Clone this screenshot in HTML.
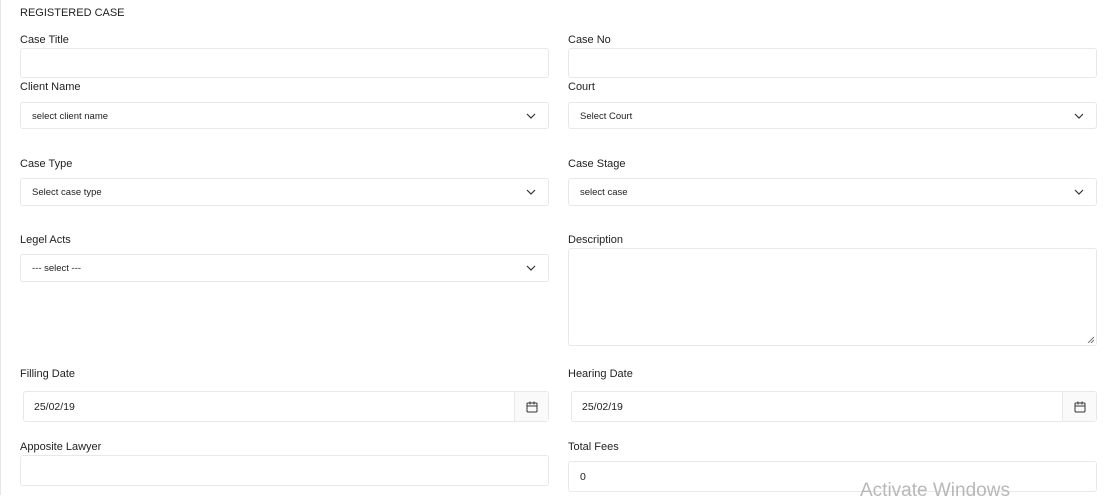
<!DOCTYPE html>
<html><head><style>
body{margin:0;width:1104px;height:495px;background:#fff;font-family:"Liberation Sans",Arial,sans-serif;color:#222;position:relative;overflow:hidden}
.b{position:absolute;border:1px solid #e8e8e8;border-radius:3px;box-sizing:border-box;background:#fff}
.l{position:absolute;font-size:11px;color:#222}
.t{position:absolute;font-size:9.5px;color:#222}
.ch{position:absolute;width:10px;height:6px}
.cal{position:absolute;top:0;right:0;width:34px;height:100%;border-left:1px solid #e8e8e8;background:#fafafa;box-sizing:border-box}
</style></head><body>
<div style="position:absolute;left:0;top:0;width:1px;height:495px;background:#e6e6e6"></div>
<div class="l" style="left:20px;top:7px">REGISTERED CASE</div>

<div class="l" style="left:20px;top:34px">Case Title</div>
<div class="b" style="left:20px;top:48px;width:529px;height:30px"></div>
<div class="l" style="left:568px;top:34px">Case No</div>
<div class="b" style="left:568px;top:48px;width:529px;height:30px"></div>

<div class="l" style="left:20px;top:81px">Client Name</div>
<div class="b" style="left:20px;top:102px;width:529px;height:27px"><span class="t" style="left:11px;top:8px">select client name</span><svg class="ch" style="right:12px;top:10px" viewBox="0 0 10 6"><path d="M1 1l4 4 4-4" fill="none" stroke="#333" stroke-width="1.2"/></svg></div>
<div class="l" style="left:568px;top:81px">Court</div>
<div class="b" style="left:568px;top:102px;width:529px;height:27px"><span class="t" style="left:11px;top:8px">Select Court</span><svg class="ch" style="right:12px;top:10px" viewBox="0 0 10 6"><path d="M1 1l4 4 4-4" fill="none" stroke="#333" stroke-width="1.2"/></svg></div>

<div class="l" style="left:20px;top:158px">Case Type</div>
<div class="b" style="left:20px;top:178px;width:529px;height:28px"><span class="t" style="left:11px;top:8px">Select case type</span><svg class="ch" style="right:12px;top:10px" viewBox="0 0 10 6"><path d="M1 1l4 4 4-4" fill="none" stroke="#333" stroke-width="1.2"/></svg></div>
<div class="l" style="left:568px;top:158px">Case Stage</div>
<div class="b" style="left:568px;top:178px;width:529px;height:28px"><span class="t" style="left:11px;top:8px">select case</span><svg class="ch" style="right:12px;top:10px" viewBox="0 0 10 6"><path d="M1 1l4 4 4-4" fill="none" stroke="#333" stroke-width="1.2"/></svg></div>

<div class="l" style="left:20px;top:234px">Legel Acts</div>
<div class="b" style="left:20px;top:254px;width:529px;height:28px"><span class="t" style="left:11px;top:8px">--- select ---</span><svg class="ch" style="right:12px;top:10px" viewBox="0 0 10 6"><path d="M1 1l4 4 4-4" fill="none" stroke="#333" stroke-width="1.2"/></svg></div>
<div class="l" style="left:568px;top:234px">Description</div>
<div class="b" style="left:568px;top:248px;width:529px;height:98px"><svg style="position:absolute;right:2px;bottom:2px" width="7" height="7"><path d="M7 1L1 7M7 4L4 7" stroke="#777"/></svg></div>

<div class="l" style="left:20px;top:368px">Filling Date</div>
<div class="b" style="left:23px;top:391px;width:526px;height:31px"><span class="t" style="left:10px;top:9px;font-size:10.5px">25/02/19</span><div class="cal"><svg style="position:absolute;left:11px;top:9px" width="12" height="12" viewBox="0 0 12 12"><rect x="1" y="2" width="10" height="9" rx="1" fill="none" stroke="#333"/><path d="M1 5h10M4 0.5v3M8 0.5v3" stroke="#333"/></svg></div></div>
<div class="l" style="left:568px;top:368px">Hearing Date</div>
<div class="b" style="left:571px;top:391px;width:526px;height:31px"><span class="t" style="left:10px;top:9px;font-size:10.5px">25/02/19</span><div class="cal"><svg style="position:absolute;left:11px;top:9px" width="12" height="12" viewBox="0 0 12 12"><rect x="1" y="2" width="10" height="9" rx="1" fill="none" stroke="#333"/><path d="M1 5h10M4 0.5v3M8 0.5v3" stroke="#333"/></svg></div></div>

<div class="l" style="left:20px;top:441px">Apposite Lawyer</div>
<div class="b" style="left:20px;top:455px;width:529px;height:31px"></div>
<div class="l" style="left:568px;top:441px">Total Fees</div>
<div class="b" style="left:568px;top:461px;width:529px;height:31px"><span class="t" style="left:11px;top:9px;font-size:10.5px">0</span></div>
<div style="position:absolute;left:860px;top:480px;font-size:19px;color:#b8b8b8">Activate Windows</div>
</body></html>
